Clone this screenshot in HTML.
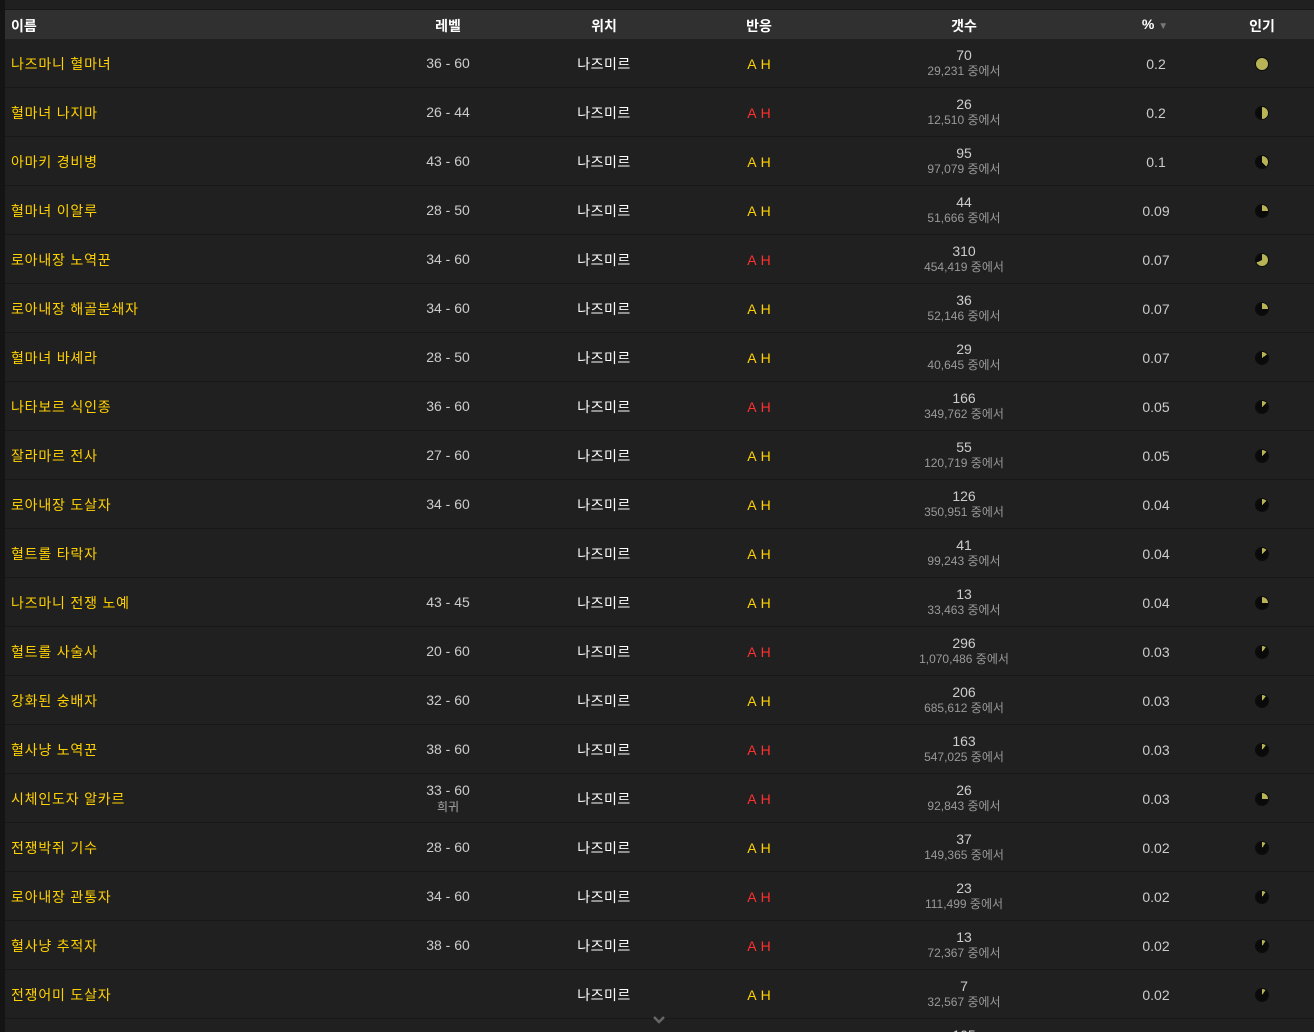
<!DOCTYPE html><html><head><meta charset="utf-8"><style>
html,body{margin:0;width:1314px;height:1032px;overflow:hidden}
body{background:#202020;font-family:"Liberation Sans","Noto Sans CJK KR",sans-serif;position:relative}
.strip{position:absolute;left:0;top:0;width:5px;height:1032px;background:#141414}
.hd{position:absolute;left:5px;top:9px;width:1309px;height:29px;background:#303030;border-top:1px solid #181818;border-bottom:1px solid #181818;color:#fff;font-size:14px;font-weight:bold}
.hd span,.r span{position:absolute;transform:translateX(-50%);white-space:nowrap}
.hd span{top:6px}
.r{position:absolute;left:5px;width:1309px;height:48px;border-bottom:1px solid #181818;background:#202020;font-size:14px;overflow:hidden}
.r .n{left:6px;transform:none;top:15px;color:#ffd100;letter-spacing:0.8px}
.r .l{left:443px;top:16px;color:#ccc}
.r .l2{left:443px;top:8px;color:#ccc;text-align:center;line-height:16px}
.r .l2 small{font-size:12px;color:#aaa}
.r .p{left:599px;top:15px;color:#fff;letter-spacing:0.5px}
.r .a{left:754px;top:17px;font-size:14px;color:#ffd100;word-spacing:1px}
.r .a.h{color:#ff3030}
.r .c{left:959px;top:8px;text-align:center;color:#ccc;line-height:17px}
.r .c small{font-size:12px;color:#999;display:block;line-height:15px}
.r .pc{left:1151px;top:17px;color:#ccc}
.pie{position:absolute;left:1251px;top:19px;width:12px;height:12px;border-radius:50%;box-shadow:0 0 0 1px #0c0c0c}
</style></head><body>
<div class="strip"></div>
<div class="hd"><span style="left:6px;transform:none">이름</span><span style="left:443px">레벨</span><span style="left:599px">위치</span><span style="left:754px">반응</span><span style="left:959px">갯수</span><span style="left:1150px">% <span style="position:static;transform:none;color:#777;font-size:10px">▼</span></span><span style="left:1257px">인기</span></div>
<div class="r" style="top:39px"><span class="n">나즈마니 혈마녀</span><span class="l">36 - 60</span><span class="p">나즈미르</span><span class="a">A H</span><span class="c">70<small>29,231 중에서</small></span><span class="pc">0.2</span><i class="pie" style="background:conic-gradient(#b8b455 0 100%,#0a0a0a 0)"></i></div>
<div class="r" style="top:88px"><span class="n">혈마녀 나지마</span><span class="l">26 - 44</span><span class="p">나즈미르</span><span class="a h">A H</span><span class="c">26<small>12,510 중에서</small></span><span class="pc">0.2</span><i class="pie" style="background:conic-gradient(#b8b455 0 50%,#0a0a0a 0)"></i></div>
<div class="r" style="top:137px"><span class="n">아마키 경비병</span><span class="l">43 - 60</span><span class="p">나즈미르</span><span class="a">A H</span><span class="c">95<small>97,079 중에서</small></span><span class="pc">0.1</span><i class="pie" style="background:conic-gradient(#b8b455 0 38%,#0a0a0a 0)"></i></div>
<div class="r" style="top:186px"><span class="n">혈마녀 이알루</span><span class="l">28 - 50</span><span class="p">나즈미르</span><span class="a">A H</span><span class="c">44<small>51,666 중에서</small></span><span class="pc">0.09</span><i class="pie" style="background:conic-gradient(#b8b455 0 25%,#0a0a0a 0)"></i></div>
<div class="r" style="top:235px"><span class="n">로아내장 노역꾼</span><span class="l">34 - 60</span><span class="p">나즈미르</span><span class="a h">A H</span><span class="c">310<small>454,419 중에서</small></span><span class="pc">0.07</span><i class="pie" style="background:conic-gradient(#b8b455 0 68%,#0a0a0a 0)"></i></div>
<div class="r" style="top:284px"><span class="n">로아내장 해골분쇄자</span><span class="l">34 - 60</span><span class="p">나즈미르</span><span class="a">A H</span><span class="c">36<small>52,146 중에서</small></span><span class="pc">0.07</span><i class="pie" style="background:conic-gradient(#b8b455 0 25%,#0a0a0a 0)"></i></div>
<div class="r" style="top:333px"><span class="n">혈마녀 바셰라</span><span class="l">28 - 50</span><span class="p">나즈미르</span><span class="a">A H</span><span class="c">29<small>40,645 중에서</small></span><span class="pc">0.07</span><i class="pie" style="background:conic-gradient(#b8b455 0 15%,#0a0a0a 0)"></i></div>
<div class="r" style="top:382px"><span class="n">나타보르 식인종</span><span class="l">36 - 60</span><span class="p">나즈미르</span><span class="a h">A H</span><span class="c">166<small>349,762 중에서</small></span><span class="pc">0.05</span><i class="pie" style="background:conic-gradient(#b8b455 0 13%,#0a0a0a 0)"></i></div>
<div class="r" style="top:431px"><span class="n">잘라마르 전사</span><span class="l">27 - 60</span><span class="p">나즈미르</span><span class="a">A H</span><span class="c">55<small>120,719 중에서</small></span><span class="pc">0.05</span><i class="pie" style="background:conic-gradient(#b8b455 0 13%,#0a0a0a 0)"></i></div>
<div class="r" style="top:480px"><span class="n">로아내장 도살자</span><span class="l">34 - 60</span><span class="p">나즈미르</span><span class="a">A H</span><span class="c">126<small>350,951 중에서</small></span><span class="pc">0.04</span><i class="pie" style="background:conic-gradient(#b8b455 0 13%,#0a0a0a 0)"></i></div>
<div class="r" style="top:529px"><span class="n">혈트롤 타락자</span><span class="p">나즈미르</span><span class="a">A H</span><span class="c">41<small>99,243 중에서</small></span><span class="pc">0.04</span><i class="pie" style="background:conic-gradient(#b8b455 0 13%,#0a0a0a 0)"></i></div>
<div class="r" style="top:578px"><span class="n">나즈마니 전쟁 노예</span><span class="l">43 - 45</span><span class="p">나즈미르</span><span class="a">A H</span><span class="c">13<small>33,463 중에서</small></span><span class="pc">0.04</span><i class="pie" style="background:conic-gradient(#b8b455 0 25%,#0a0a0a 0)"></i></div>
<div class="r" style="top:627px"><span class="n">혈트롤 사술사</span><span class="l">20 - 60</span><span class="p">나즈미르</span><span class="a h">A H</span><span class="c">296<small>1,070,486 중에서</small></span><span class="pc">0.03</span><i class="pie" style="background:conic-gradient(#b8b455 0 11%,#0a0a0a 0)"></i></div>
<div class="r" style="top:676px"><span class="n">강화된 숭배자</span><span class="l">32 - 60</span><span class="p">나즈미르</span><span class="a">A H</span><span class="c">206<small>685,612 중에서</small></span><span class="pc">0.03</span><i class="pie" style="background:conic-gradient(#b8b455 0 11%,#0a0a0a 0)"></i></div>
<div class="r" style="top:725px"><span class="n">혈사냥 노역꾼</span><span class="l">38 - 60</span><span class="p">나즈미르</span><span class="a h">A H</span><span class="c">163<small>547,025 중에서</small></span><span class="pc">0.03</span><i class="pie" style="background:conic-gradient(#b8b455 0 11%,#0a0a0a 0)"></i></div>
<div class="r" style="top:774px"><span class="n">시체인도자 알카르</span><span class="l2">33 - 60<br><small>희귀</small></span><span class="p">나즈미르</span><span class="a h">A H</span><span class="c">26<small>92,843 중에서</small></span><span class="pc">0.03</span><i class="pie" style="background:conic-gradient(#b8b455 0 25%,#0a0a0a 0)"></i></div>
<div class="r" style="top:823px"><span class="n">전쟁박쥐 기수</span><span class="l">28 - 60</span><span class="p">나즈미르</span><span class="a">A H</span><span class="c">37<small>149,365 중에서</small></span><span class="pc">0.02</span><i class="pie" style="background:conic-gradient(#b8b455 0 10%,#0a0a0a 0)"></i></div>
<div class="r" style="top:872px"><span class="n">로아내장 관통자</span><span class="l">34 - 60</span><span class="p">나즈미르</span><span class="a h">A H</span><span class="c">23<small>111,499 중에서</small></span><span class="pc">0.02</span><i class="pie" style="background:conic-gradient(#b8b455 0 10%,#0a0a0a 0)"></i></div>
<div class="r" style="top:921px"><span class="n">혈사냥 추적자</span><span class="l">38 - 60</span><span class="p">나즈미르</span><span class="a h">A H</span><span class="c">13<small>72,367 중에서</small></span><span class="pc">0.02</span><i class="pie" style="background:conic-gradient(#b8b455 0 10%,#0a0a0a 0)"></i></div>
<div class="r" style="top:970px"><span class="n">전쟁어미 도살자</span><span class="p">나즈미르</span><span class="a">A H</span><span class="c">7<small>32,567 중에서</small></span><span class="pc">0.02</span><i class="pie" style="background:conic-gradient(#b8b455 0 10%,#0a0a0a 0)"></i></div>
<div class="r" style="top:1019px;height:13px;border:none"><span class="c">105</span></div>
<svg style="position:absolute;left:652px;top:1015px" width="14" height="10"><path d="M2 2 L7 7 L12 2" stroke="#666" stroke-width="2.5" fill="none"/></svg>
</body></html>
